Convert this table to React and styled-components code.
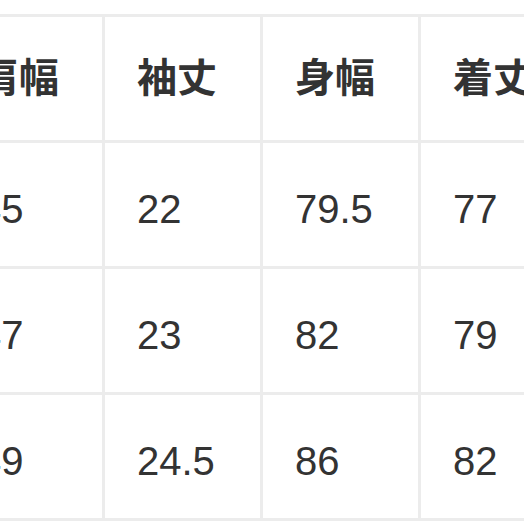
import React from 'react'
import styled, { createGlobalStyle } from 'styled-components'

const GlobalStyle = createGlobalStyle`
  html, body {
    margin: 0;
    padding: 0;
    background: #ffffff;
    overflow: hidden;
  }
`

const headers = ['肩幅', '袖丈', '身幅', '着丈']

const rows = [
  ['45', '22', '79.5', '77'],
  ['47', '23', '82', '79'],
  ['49', '24.5', '86', '82'],
]

export default function App() {
  return (
    <Page>
      <GlobalStyle />
      <SizeTable>
        {headers.map(h => (
          <Cell key={h} $head>{h}</Cell>
        ))}
        {rows.map((row, r) =>
          row.map((value, c) => (
            <Cell key={`${r}-${c}`}>{value}</Cell>
          ))
        )}
      </SizeTable>
    </Page>
  )
}

const Page = styled.div`
  width: 524px;
  height: 524px;
  overflow: hidden;
  background: #ffffff;
`

const SizeTable = styled.div`
  display: grid;
  grid-template-columns: repeat(4, 155px);
  grid-auto-rows: 123px;
  gap: 3px;
  padding: 3px;
  width: max-content;
  margin: 14px 0 0 -56px;
  background: #ececec;
`

const Cell = styled.div`
  display: flex;
  align-items: center;
  padding: ${p => (p.$head ? '0 0 7px 32px' : '8px 0 0 32px')};
  background: #ffffff;
  color: #333333;
  font-family: ${p => p.$head
    ? '"Noto Sans CJK JP", "Noto Sans", sans-serif'
    : '"Liberation Sans", Arial, "Noto Sans CJK JP", sans-serif'};
  font-size: 40px;
  font-weight: ${p => (p.$head ? 700 : 400)};
  line-height: 1;
  white-space: nowrap;
`
